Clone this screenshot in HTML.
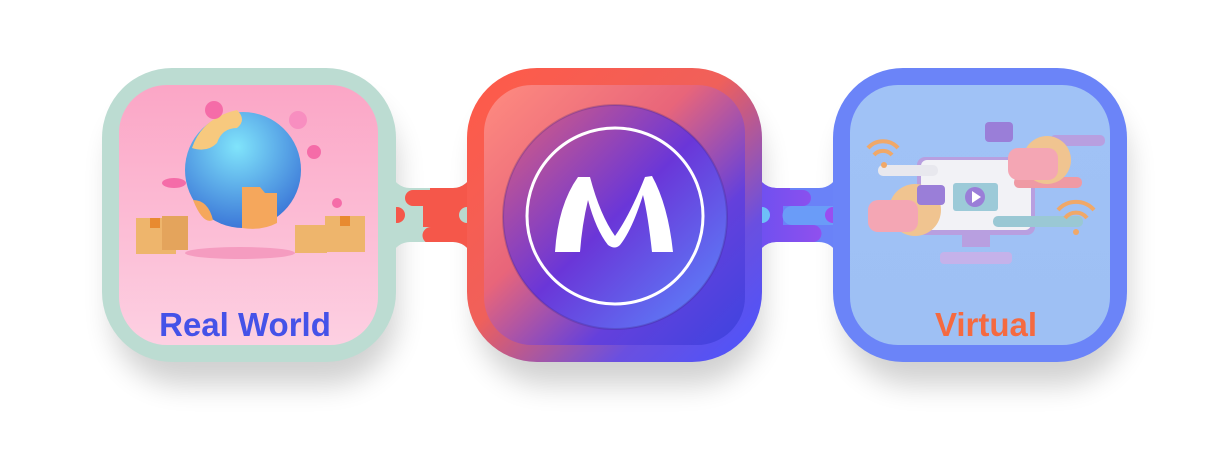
<!DOCTYPE html>
<html><head><meta charset="utf-8"><style>
html,body{margin:0;padding:0;background:#fff;width:1232px;height:465px;overflow:hidden}
svg{display:block}
text{font-family:"Liberation Sans",sans-serif;font-weight:bold}
</style></head><body>
<svg width="1232" height="465" viewBox="0 0 1232 465">
<defs>
<filter id="sh" x="-30%" y="-30%" width="160%" height="170%"><feGaussianBlur stdDeviation="14"/></filter>
<linearGradient id="cg" x1="0" y1="0" x2="1" y2="1"><stop offset="0" stop-color="#ff5a48"/><stop offset="0.45" stop-color="#f0605a"/><stop offset="0.75" stop-color="#6a4fe0"/><stop offset="1" stop-color="#4a55ff"/></linearGradient>
<linearGradient id="cg2" x1="0" y1="0" x2="1" y2="1"><stop offset="0" stop-color="#ff8c80"/><stop offset="0.4" stop-color="#e8657a"/><stop offset="0.7" stop-color="#6440dc"/><stop offset="1" stop-color="#3d44e0"/></linearGradient>
<linearGradient id="circ" x1="0" y1="0" x2="1" y2="1"><stop offset="0" stop-color="#e0607a"/><stop offset="0.5" stop-color="#6a36d8"/><stop offset="1" stop-color="#5a8cff"/></linearGradient>
<linearGradient id="pink" x1="0" y1="0" x2="0" y2="1"><stop offset="0" stop-color="#fba6c6"/><stop offset="1" stop-color="#fdd0e2"/></linearGradient>
<linearGradient id="blue" x1="0" y1="0" x2="0" y2="1"><stop offset="0" stop-color="#a0c2f6"/><stop offset="1" stop-color="#9ec0f4"/></linearGradient>
<linearGradient id="rc" x1="0" y1="0" x2="1" y2="0"><stop offset="0" stop-color="#6a50f0"/><stop offset="1" stop-color="#9050ee"/></linearGradient>
<radialGradient id="globe" cx="0.45" cy="0.3" r="0.7"><stop offset="0" stop-color="#80e4fb"/><stop offset="1" stop-color="#3c78d8"/></radialGradient>
<clipPath id="bl"><path d="M388 170 Q396 188 410 188 H453 Q467 188 475 170 V260 Q467 242 453 242 H410 Q396 242 388 260Z"/></clipPath>
<clipPath id="br"><path d="M754 170 Q762 188 776 188 H819 Q833 188 841 170 V260 Q833 242 819 242 H776 Q762 242 754 260Z"/></clipPath>
</defs>
<rect x="112" y="95" width="285" height="290" rx="70" fill="#000" opacity="0.18" filter="url(#sh)"/>
<rect x="477" y="95" width="285" height="290" rx="70" fill="#000" opacity="0.18" filter="url(#sh)"/>
<rect x="843" y="95" width="285" height="290" rx="70" fill="#000" opacity="0.18" filter="url(#sh)"/>
<g clip-path="url(#bl)">
<rect x="380" y="160" width="100" height="110" fill="#bcdcd2"/>
<path d="M480 160 V270 H431 V244 a8 8 0 0 1 0-17 H423 V206 H413 a8 8 0 0 1 0-16 H430 V160Z" fill="#f5574a"/>
</g>
<circle cx="397" cy="215" r="8" fill="#f5574a"/>
<circle cx="467" cy="215" r="8" fill="#b8d8ce"/>
<g clip-path="url(#br)">
<rect x="750" y="160" width="100" height="110" fill="#6a82f8"/>
<path d="M750 160 H790 V190 H803 a8 8 0 0 1 0 16 H783 V225 H813 a8 8 0 0 1 0 17 H790 V270 H750Z" fill="url(#rc)"/>
<path d="M850 206 H792 a9.5 9.5 0 0 0 0 19 H850Z" fill="#6a9cf8"/>
</g>
<circle cx="762" cy="215" r="8" fill="#6ec0f8"/>
<circle cx="833" cy="215" r="8" fill="#9a4ef0"/>
<rect x="102" y="68" width="294" height="294" rx="70" fill="#bcdcd2"/>
<rect x="119" y="85" width="259" height="260" rx="48" fill="url(#pink)"/>
<ellipse cx="240" cy="253" rx="55" ry="6" fill="#f59cc0"/>
<circle cx="243" cy="170" r="58" fill="url(#globe)"/>
<path d="M192 148 q10-30 45-38 q10 10 0 18 q-15 0-20 15 q-10 10-25 5Z" fill="#f7c97e"/>
<path d="M242 187 h18 l5 6 h12 v30 q-15 8-35 5Z" fill="#f5a75c"/>
<path d="M193 200 q15 0 20 20 q-10 5-20-20Z" fill="#f5a75c"/>
<rect x="136" y="218" width="40" height="36" fill="#eeb56c"/><rect x="150" y="218" width="10" height="10" fill="#e88a30"/>
<rect x="162" y="216" width="26" height="34" fill="#e4a45c"/>
<rect x="295" y="225" width="32" height="28" fill="#eeb56c"/>
<rect x="325" y="216" width="40" height="36" fill="#eeb56c"/><rect x="340" y="216" width="10" height="10" fill="#e88a30"/>
<circle cx="214" cy="110" r="9" fill="#f56ca8"/><circle cx="298" cy="120" r="9" fill="#f88ec0"/><circle cx="314" cy="152" r="7" fill="#f56ca8"/><ellipse cx="174" cy="183" rx="12" ry="5" fill="#f56ca8"/><circle cx="337" cy="203" r="5" fill="#f56ca8"/>
<text x="245" y="336" text-anchor="middle" font-size="33" fill="#4552e8">Real World</text>
<rect x="467" y="68" width="295" height="294" rx="70" fill="url(#cg)"/>
<rect x="484" y="85" width="261" height="260" rx="48" fill="url(#cg2)"/>
<circle cx="615" cy="217" r="112" fill="url(#circ)" stroke="rgba(60,30,120,0.25)" stroke-width="2"/>
<circle cx="615" cy="216" r="88" fill="none" stroke="#fff" stroke-width="3"/>
<path d="M555 252 Q558 205 578 177 L590 177 Q600 215 615 236 Q630 215 645 177 L652 176 Q668 205 673 252 L652 252 Q648 215 643 195 Q632 230 620 245 Q615 250 608 245 Q596 230 588 200 Q582 225 580 252Z" fill="#fff"/>
<rect x="833" y="68" width="294" height="294" rx="70" fill="#6b84f8"/>
<rect x="850" y="85" width="260" height="260" rx="48" fill="url(#blue)"/>
<rect x="917" y="157" width="118" height="78" rx="8" fill="#b89fe0"/>
<rect x="921" y="160" width="110" height="70" rx="6" fill="#f2f2f6"/>
<rect x="953" y="183" width="45" height="28" rx="3" fill="#9ccad8"/>
<circle cx="975" cy="197" r="10" fill="#9a7ed8"/><path d="M972 191 l9 6 l-9 6Z" fill="#fff"/>
<rect x="962" y="235" width="28" height="12" fill="#b89fe0"/><rect x="940" y="252" width="72" height="12" rx="4" fill="#c5b2ea"/>
<rect x="1050" y="135" width="55" height="11" rx="5" fill="#b89fe0"/>
<rect x="1014" y="177" width="68" height="11" rx="5" fill="#ef9aa4"/>
<rect x="993" y="216" width="90" height="11" rx="5" fill="#9ac8d4"/>
<rect x="878" y="165" width="60" height="11" rx="5" fill="#e8e8ee"/>
<circle cx="1047" cy="160" r="24" fill="#f0c490"/><rect x="1008" y="148" width="50" height="32" rx="10" fill="#f4a6b4"/>
<circle cx="915" cy="210" r="26" fill="#f0c490"/><rect x="868" y="200" width="50" height="32" rx="10" fill="#f4a6b4"/>
<rect x="985" y="122" width="28" height="20" rx="4" fill="#9a7ed8"/><rect x="917" y="185" width="28" height="20" rx="4" fill="#9a7ed8"/>
<path d="M868 148 a20 20 0 0 1 30 0 M874 155 a12 12 0 0 1 18 0" stroke="#f0a868" stroke-width="4" fill="none"/><circle cx="884" cy="165" r="3" fill="#f0a868"/>
<path d="M1058 210 a24 24 0 0 1 36 0 M1065 218 a14 14 0 0 1 22 0" stroke="#f0a868" stroke-width="4" fill="none"/><circle cx="1076" cy="232" r="3" fill="#f0a868"/>
<text x="986" y="336" text-anchor="middle" font-size="33" fill="#f56a40">Virtual</text>
</svg>
</body></html>
